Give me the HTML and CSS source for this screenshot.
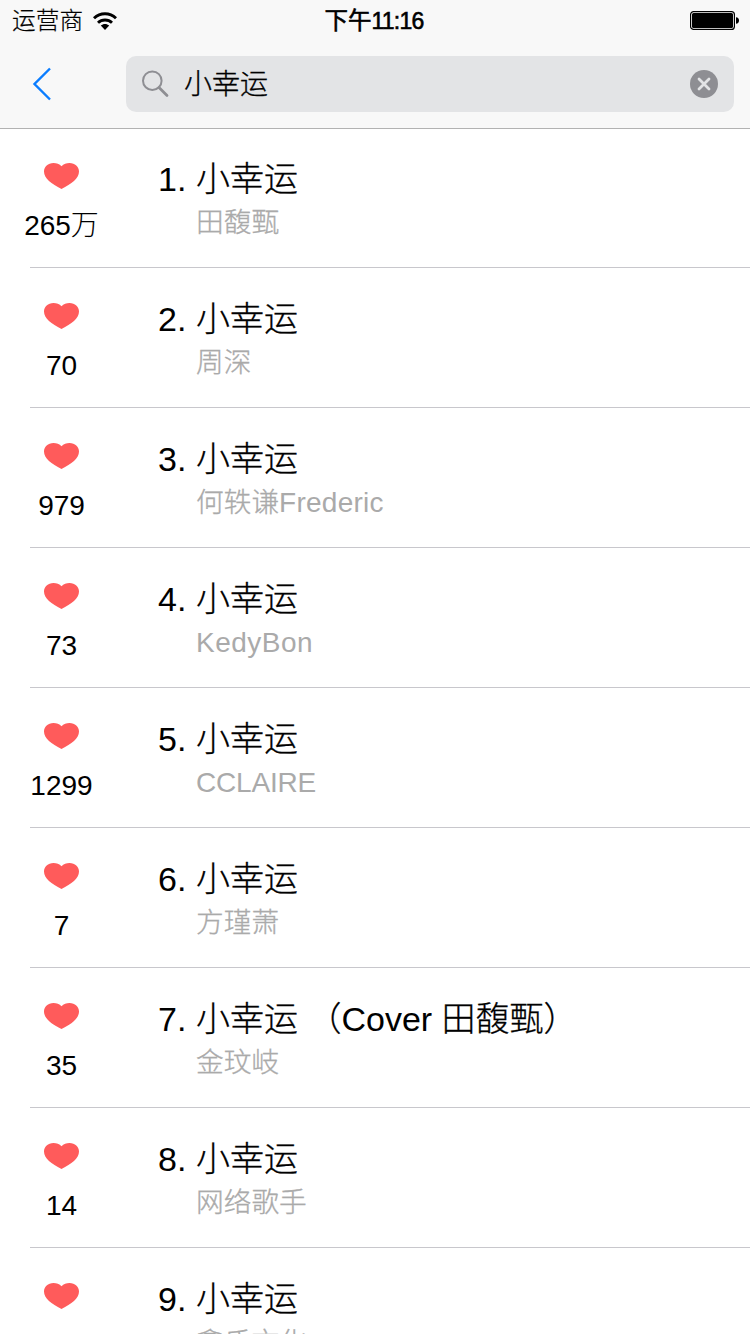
FILE: index.html
```html
<!DOCTYPE html>
<html lang="zh-CN">
<head>
<meta charset="utf-8">
<title>小幸运</title>
<link rel="stylesheet" href="styles.css">
</head>
<body>
<svg class="defs" aria-hidden="true"><symbol id="heart" viewBox="0 0 35 26"><path d="M17.500 3.200C15.500 1 12.500 0 9.500 0 4 0 0 3.600 0 8.600 0 15.500 7.500 21 17.500 26 27.500 21 35 15.500 35 8.600 35 3.600 31 0 25.500 0c-3 0-6 1-8 3.200z"/></symbol></svg>
<header class="header">
  <div class="status">
    <div class="carrier"><span>运营商</span>
      <svg class="wifi" viewBox="0 0 24 18"><g fill="none" stroke="#000" stroke-width="2.9"><path d="M1 6.300C7.200.3 16.800.3 23 6.300"/><path d="M5 10.700c3.900-3.700 10.100-3.700 14 0"/></g><path d="M7.800 13.600c2.400-2.200 6-2.200 8.400 0L12 18z"/></svg>
    </div>
    <div class="clock">下午<span class="time">11:16</span></div>
    <svg class="battery" viewBox="0 0 50 20"><rect x=".6" y=".6" width="43.800" height="17.800" rx="3" fill="#fff" stroke="#000" stroke-width="1.200"/><rect x="2" y="2" width="41" height="15" rx="1.500"/><path d="M46 6.200c2 0 3 1.500 3 3.300s-1 3.300-3 3.300z"/></svg>
  </div>
  <div class="nav">
    <svg class="back" viewBox="0 0 20 34"><path d="M18 1.500 2.500 17 18 32.500" fill="none" stroke="#0a7dff" stroke-width="2.400"/></svg>
    <div class="search">
      <svg class="glass" viewBox="0 0 28 28"><circle cx="10.300" cy="10.700" r="9.300" fill="none" stroke="#8e8e93" stroke-width="2"/><path d="m17 17.500 8 8" stroke="#8e8e93" stroke-width="2.800" stroke-linecap="round"/></svg>
      <span class="query">小幸运</span>
      <svg class="clear" viewBox="0 0 28 28"><circle cx="14" cy="14" r="14" fill="#8e8e93"/><path d="m9 9 10 10M19 9 9 19" stroke="#e3e4e6" stroke-width="2.800" stroke-linecap="round"/></svg>
    </div>
  </div>
</header>
<main class="list">
  <article class="row"><div class="likes"><svg class="heart"><use href="#heart"/></svg><span class="count">265万</span></div><div class="song"><div class="title"><span class="num">1.</span><span>小幸运</span></div><div class="artist">田馥甄</div></div></article>
  <article class="row"><div class="likes"><svg class="heart"><use href="#heart"/></svg><span class="count">70</span></div><div class="song"><div class="title"><span class="num">2.</span><span>小幸运</span></div><div class="artist">周深</div></div></article>
  <article class="row"><div class="likes"><svg class="heart"><use href="#heart"/></svg><span class="count">979</span></div><div class="song"><div class="title"><span class="num">3.</span><span>小幸运</span></div><div class="artist">何轶谦<span class="latin">Frederic</span></div></div></article>
  <article class="row"><div class="likes"><svg class="heart"><use href="#heart"/></svg><span class="count">73</span></div><div class="song"><div class="title"><span class="num">4.</span><span>小幸运</span></div><div class="artist"><span class="latin wide">KedyBon</span></div></div></article>
  <article class="row"><div class="likes"><svg class="heart"><use href="#heart"/></svg><span class="count">1299</span></div><div class="song"><div class="title"><span class="num">5.</span><span>小幸运</span></div><div class="artist"><span class="latin caps">CCLAIRE</span></div></div></article>
  <article class="row"><div class="likes"><svg class="heart"><use href="#heart"/></svg><span class="count">7</span></div><div class="song"><div class="title"><span class="num">6.</span><span>小幸运</span></div><div class="artist">方瑾萧</div></div></article>
  <article class="row"><div class="likes"><svg class="heart"><use href="#heart"/></svg><span class="count">35</span></div><div class="song"><div class="title"><span class="num">7.</span><span>小幸运 （<span class="cover">Cover</span> 田馥甄）</span></div><div class="artist">金玟岐</div></div></article>
  <article class="row"><div class="likes"><svg class="heart"><use href="#heart"/></svg><span class="count">14</span></div><div class="song"><div class="title"><span class="num">8.</span><span>小幸运</span></div><div class="artist">网络歌手</div></div></article>
  <article class="row"><div class="likes"><svg class="heart"><use href="#heart"/></svg></div><div class="song"><div class="title"><span class="num">9.</span><span>小幸运</span></div><div class="artist">鑫氏文化</div></div></article>
</main>
</body>
</html>
```
FILE: styles.css
```css
* { box-sizing: border-box; }

body {
  margin: 0;
  width: 750px;
  height: 1334px;
  overflow: hidden;
  background: #fff;
  color: #000;
  font-family: "Liberation Sans", "Noto Sans CJK SC", sans-serif;
  font-weight: 300;
}

.defs { display: none; }
svg { display: block; flex: none; }

.header {
  height: 129px;
  background: #f8f8f8;
  border-bottom: 1px solid #b2b2b2;
}

.status {
  display: grid;
  grid-template-columns: 1fr auto 1fr;
  align-items: center;
  height: 40px;
  padding: 1px 10px 0 12px;
  font-size: 24px;
  line-height: 41px;
}

.carrier { display: flex; align-items: center; gap: 10px; font-size: 23.7px; -webkit-text-stroke: 0.2px #000; }
.wifi { width: 24px; height: 18px; margin-top: -2px; }
.clock { padding-right: 4px; font-weight: 400; -webkit-text-stroke: 0.6px #000; font-size: 23.5px; }
.time { font-size: 23px; letter-spacing: -0.8px; }
.battery { width: 50px; height: 20px; margin-top: -1px; justify-self: end; }

.nav {
  display: flex;
  align-items: center;
  height: 88px;
  padding: 0 16px 0 32px;
}

.back { width: 20px; height: 34px; margin-right: 74px; }

.search {
  display: flex;
  align-items: center;
  flex: 1;
  height: 56px;
  padding: 0 16px;
  border-radius: 10px;
  background: #e3e4e6;
}

.glass { width: 28px; height: 28px; }
.query { flex: 1; padding: 2px 0 0 14px; font-size: 28px; line-height: 54px; -webkit-text-stroke: 0.3px #000; }
.clear { width: 28px; height: 28px; }

.row {
  display: flex;
  height: 140px;
  background: linear-gradient(#c8c7cc, #c8c7cc) 30px 100% / 720px 1px no-repeat;
}

.row:first-child { height: 139px; }
.row:not(:first-child) .likes { padding-top: 35px; }
.row:not(:first-child) .song { padding-top: 30px; }

.likes {
  display: flex;
  flex-direction: column;
  align-items: center;
  width: 123px;
  padding-top: 34px;
}

.heart { width: 35px; height: 26px; fill: #ff5b5b; }
.count { margin-top: 19px; font-size: 28px; line-height: 36px; }

.song { padding: 29px 0 0 35px; white-space: nowrap; }
.title { display: flex; height: 42px; font-size: 34px; line-height: 42px; -webkit-text-stroke: 0.3px #000; }
.num, .cover { -webkit-text-stroke: 0; }
.num { width: 38px; }

.artist {
  padding: 2px 0 0 38px;
  color: #aaa;
  font-size: 27.7px;
  line-height: 42px;
  -webkit-text-stroke: 0.3px #aaa;
}

.latin { font-size: 28px; letter-spacing: 0.25px; -webkit-text-stroke: 0; }
.wide { letter-spacing: 0.5px; }
.caps { letter-spacing: -0.2px; }
```
